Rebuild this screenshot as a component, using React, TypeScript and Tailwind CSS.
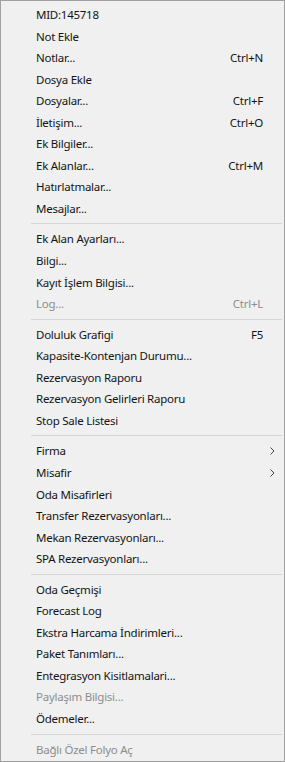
type Item = { label: string; shortcut?: string; disabled?: boolean; sub?: boolean };

const groups: Item[][] = [
  [
    { label: 'MID:145718' },
    { label: 'Not Ekle' },
    { label: 'Notlar...', shortcut: 'Ctrl+N' },
    { label: 'Dosya Ekle' },
    { label: 'Dosyalar...', shortcut: 'Ctrl+F' },
    { label: 'İletişim...', shortcut: 'Ctrl+O' },
    { label: 'Ek Bilgiler...' },
    { label: 'Ek Alanlar...', shortcut: 'Ctrl+M' },
    { label: 'Hatırlatmalar...' },
    { label: 'Mesajlar...' },
  ],
  [
    { label: 'Ek Alan Ayarları...' },
    { label: 'Bilgi...' },
    { label: 'Kayıt İşlem Bilgisi...' },
    { label: 'Log...', shortcut: 'Ctrl+L', disabled: true },
  ],
  [
    { label: 'Doluluk Grafigi', shortcut: 'F5' },
    { label: 'Kapasite-Kontenjan Durumu...' },
    { label: 'Rezervasyon Raporu' },
    { label: 'Rezervasyon Gelirleri Raporu' },
    { label: 'Stop Sale Listesi' },
  ],
  [
    { label: 'Firma', sub: true },
    { label: 'Misafir', sub: true },
    { label: 'Oda Misafirleri' },
    { label: 'Transfer Rezervasyonları...' },
    { label: 'Mekan Rezervasyonları...' },
    { label: 'SPA Rezervasyonları...' },
  ],
  [
    { label: 'Oda Geçmişi' },
    { label: 'Forecast Log' },
    { label: 'Ekstra Harcama İndirimleri...' },
    { label: 'Paket Tanımları...' },
    { label: 'Entegrasyon Kisitlamalari...' },
    { label: 'Paylaşım Bilgisi...', disabled: true },
    { label: 'Ödemeler...' },
  ],
  [{ label: 'Bağlı Özel Folyo Aç', disabled: true }],
];

function Row({ item }: { item: Item }) {
  const color = item.disabled ? 'text-[#8d8d8d]' : 'text-[#141414]';
  return (
    <div className={`flex h-[21.55px] items-center pl-[35px] pr-[21px] ${color}`}>
      <span className="flex-1 whitespace-nowrap">{item.label}</span>
      {item.shortcut && <span className="whitespace-nowrap">{item.shortcut}</span>}
      {item.sub && (
        <svg width="5" height="8" viewBox="0 0 5 8" className="-mr-[12px]">
          <path d="M0.5 0.5 L4 4 L0.5 7.5" fill="none" stroke="#444" strokeWidth="1" />
        </svg>
      )}
    </div>
  );
}

export default function App() {
  return (
    <div className="h-[762px] w-[285px] border border-[#a0a0a0] bg-[#f0f0f0] pt-[3px] text-[11.5px] leading-none tracking-[-0.25px] font-['Segoe_UI','Noto_Sans',sans-serif]">
      {groups.map((g, i) => (
        <div key={i}>
          {i > 0 && (
            <div className="flex h-[9px] items-center pl-[30px] pr-[2px]">
              <div className="h-px flex-1 bg-[#d5d5d5]" />
            </div>
          )}
          {g.map(item => (
            <Row key={item.label} item={item} />
          ))}
        </div>
      ))}
    </div>
  );
}
